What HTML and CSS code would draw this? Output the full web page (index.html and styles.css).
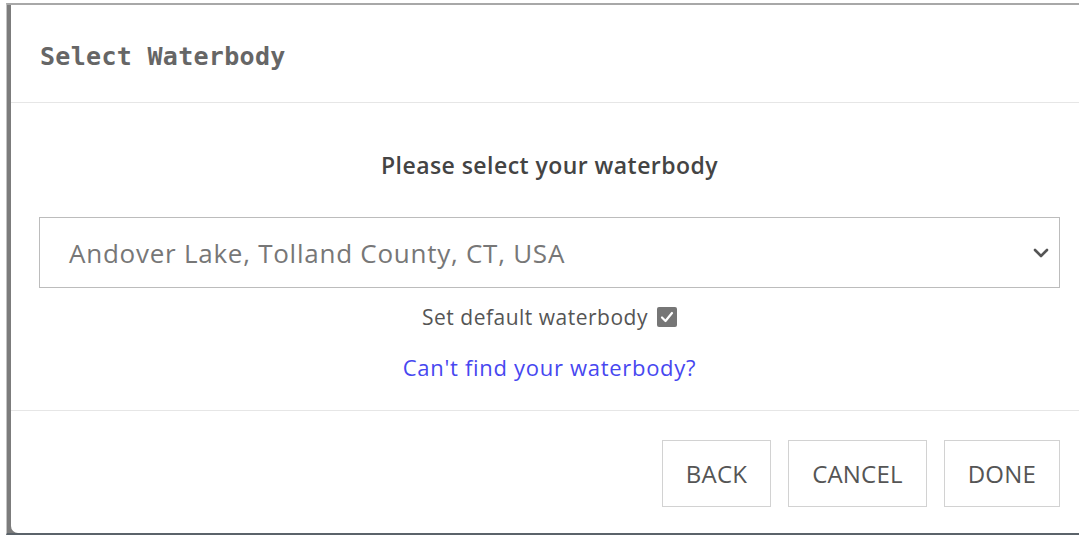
FILE: index.html
```html
<!DOCTYPE html>
<html lang="en">
<head>
<meta charset="utf-8">
<title>Select Waterbody</title>
<link rel="stylesheet" href="styles.css">
</head>
<body>
<div class="stage">
  <div class="backdrop">
    <div class="dialog">
      <div class="dialog-header">
        <h2 class="dialog-title">Select Waterbody</h2>
      </div>
      <div class="dialog-body">
        <p class="prompt">Please select your waterbody</p>
        <div class="select">
          <span class="select-value">Andover Lake, Tolland County, CT, USA</span>
          <svg class="chevron" width="16" height="10" viewBox="0 0 16 10"><polyline points="2,2 8,8 14,2" fill="none" stroke="#555" stroke-width="2.6" stroke-linecap="round" stroke-linejoin="round"/></svg>
        </div>
        <label class="default-row">
          <span>Set default waterbody</span>
          <span class="checkbox"><svg width="14" height="12" viewBox="0 0 14 12"><polyline points="2,6.5 5.5,10 12,2" fill="none" stroke="#fff" stroke-width="2.2" stroke-linecap="round" stroke-linejoin="round"/></svg></span>
        </label>
        <a class="help-link" href="#">Can't find your waterbody?</a>
      </div>
      <div class="dialog-footer">
        <button class="btn">BACK</button>
        <button class="btn">CANCEL</button>
        <button class="btn">DONE</button>
      </div>
    </div>
  </div>
</div>
</body>
</html>
```

FILE: styles.css
```css
html, body {
  margin: 0;
  padding: 0;
  background: #fff;
}

.stage {
  width: 1079px;
  height: 535px;
  box-sizing: border-box;
  padding: 3px 0 0 6px;
  overflow: hidden;
}

.backdrop {
  width: 1100px;
  height: 532px;
  box-sizing: border-box;
  border-top: 2px solid #a8a8a8;
  border-left: 1px solid #c4c4c4;
  border-bottom: 2px solid #5b636a;
  background: #7c7c7c;
  padding-left: 4px;
}

.dialog {
  width: 1077px;
  height: 528px;
  background: #fff;
  border-radius: 0 0 0 7px;
  display: flex;
  flex-direction: column;
  font-family: "Open Sans", "Noto Sans", sans-serif;
}

.dialog-header {
  height: 98px;
  box-sizing: border-box;
  border-bottom: 1px solid #e6e6e6;
  padding: 36px 28px 0 29px;
}

.dialog-title {
  margin: 0;
  font-family: "DejaVu Sans Mono", monospace;
  font-weight: bold;
  font-size: 25px;
  line-height: 32px;
  letter-spacing: 0.3px;
  color: #666;
}

.dialog-body {
  display: flex;
  flex-direction: column;
  align-items: center;
  padding: 47px 28px 29px 28px;
  border-bottom: 1px solid #e6e6e6;
}

.prompt {
  margin: 0;
  font-weight: 600;
  font-size: 23px;
  line-height: 30px;
  letter-spacing: 0.45px;
  color: #444;
}

.select {
  align-self: stretch;
  margin-top: 37px;
  height: 71px;
  box-sizing: border-box;
  border: 1px solid #bcbcbc;
  display: flex;
  align-items: center;
  justify-content: space-between;
  padding: 0 10px 0 29px;
}

.select-value {
  font-size: 26px;
  letter-spacing: 0.75px;
  color: #777;
}

.chevron {
  display: block;
}

.default-row {
  margin-top: 15px;
  display: flex;
  align-items: center;
  gap: 9px;
  font-size: 21px;
  line-height: 28px;
  letter-spacing: 0.5px;
  color: #555;
}

.checkbox {
  width: 20px;
  height: 20px;
  border-radius: 2px;
  background: #767676;
  display: flex;
  align-items: center;
  justify-content: center;
}

.help-link {
  margin-top: 22px;
  font-size: 22px;
  line-height: 28px;
  letter-spacing: 0.7px;
  color: #4747f0;
  text-decoration: none;
}

.dialog-footer {
  display: flex;
  justify-content: flex-end;
  gap: 17px;
  padding: 29px 28px 0 28px;
}

.btn {
  height: 67px;
  padding: 0 23px;
  background: #fff;
  border: 1px solid #d2d2d2;
  font-family: "Open Sans", "Noto Sans", sans-serif;
  font-size: 24px;
  letter-spacing: 0.2px;
  color: #555;
}
```
